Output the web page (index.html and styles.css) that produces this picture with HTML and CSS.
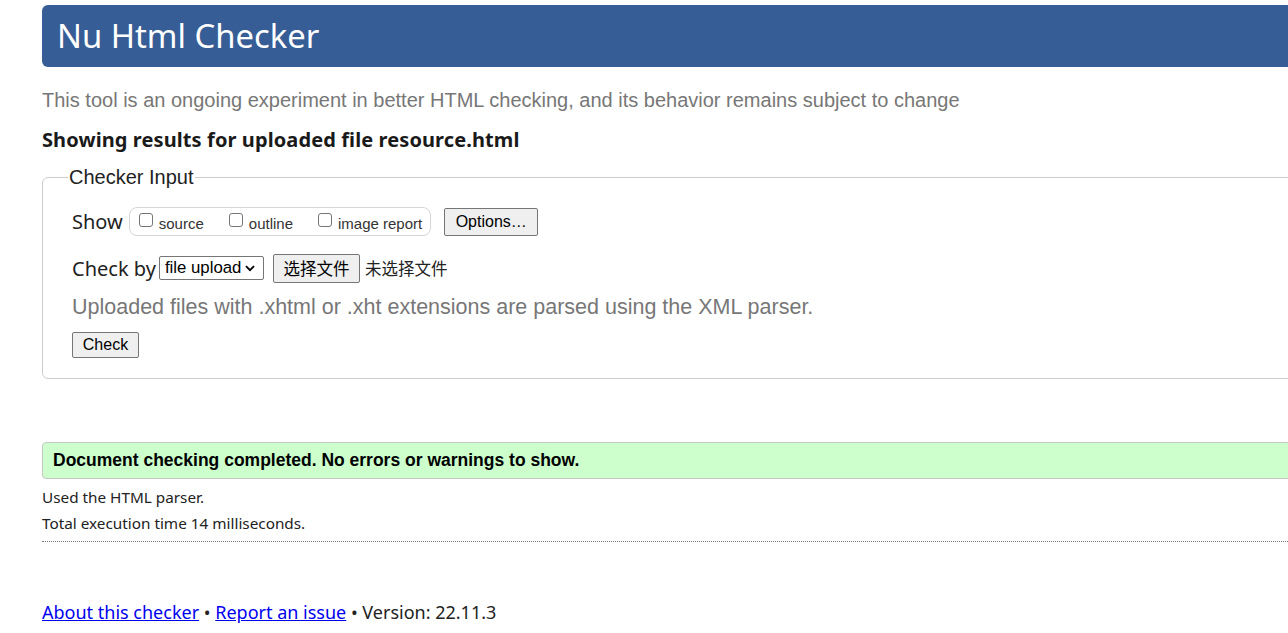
FILE: index.html
```html
<!DOCTYPE html>
<html lang="en">
<head>
<meta charset="utf-8">
<title>Nu Html Checker</title>
<link rel="stylesheet" href="styles.css">
</head>
<body>
<div class="page">
  <h1 class="title">Nu Html Checker</h1>
  <p class="intro">This tool is an ongoing experiment in better HTML checking, and its behavior remains subject to change</p>
  <p class="showing">Showing results for uploaded file resource.html</p>
  <fieldset class="input-box">
    <legend class="legend">Checker Input</legend>
    <div class="row show-row">
      <span class="label">Show</span>
      <div class="group">
        <label class="opt"><span class="cb"></span><span>source</span></label>
        <label class="opt"><span class="cb"></span><span>outline</span></label>
        <label class="opt"><span class="cb"></span><span>image report</span></label>
      </div>
      <span class="btn btn-options">Options…</span>
    </div>
    <div class="row by-row">
      <span class="label">Check by</span>
      <span class="select">file upload<svg class="chev" width="10" height="7" viewBox="0 0 10 7"><path d="M1 1.2 L5 5.2 L9 1.2" fill="none" stroke="#000" stroke-width="1.8"/></svg></span>
      <span class="btn btn-file">选择文件</span>
      <span class="nofile">未选择文件</span>
    </div>
    <p class="note">Uploaded files with .xhtml or .xht extensions are parsed using the XML parser.</p>
    <span class="btn btn-check">Check</span>
  </fieldset>
  <div class="success">Document checking completed. No errors or warnings to show.</div>
  <p class="meta">Used the HTML parser.</p>
  <p class="meta meta2">Total execution time 14 milliseconds.</p>
  <div class="rule"></div>
  <p class="footer"><a href="#">About this checker</a> • <a href="#">Report an issue</a> • Version: 22.11.3</p>
</div>
</body>
</html>
```

FILE: styles.css
```css
html, body {
  margin: 0;
  padding: 0;
  background: #fff;
  overflow: hidden;
}
body {
  font-family: "Noto Sans", "Open Sans", sans-serif;
  color: #222;
}
.page {
  margin-left: 42px;
  margin-right: -40px;
}
.title {
  margin: 5px 0 0 0;
  height: 62px;
  line-height: 62px;
  background: #365d95;
  color: #fff;
  font-family: "Noto Sans", sans-serif;
  font-weight: 400;
  font-size: 32.8px;
  padding-left: 15px;
  border-radius: 6px 0 0 6px;
}
.intro {
  margin: 21px 0 0 0;
  font-family: "Liberation Sans", Arial, sans-serif;
  font-size: 20px;
  line-height: 24px;
  color: #777;
}
.showing {
  margin: 16px 0 0 0;
  font-family: "Noto Sans", sans-serif;
  font-weight: 700;
  font-size: 20px;
  letter-spacing: 0.1px;
  line-height: 24px;
  color: #1a1a1a;
}
.input-box {
  margin: 13px 0 0 0;
  border: 1px solid #ccc;
  border-radius: 6px;
  padding: 0 0 20px 29px;
}
.legend {
  font-family: "Liberation Sans", Arial, sans-serif;
  font-size: 20px;
  line-height: 24px;
  color: #222;
  padding: 0 1px;
  margin-left: -4px;
}
.row {
  display: flex;
  align-items: center;
}
.show-row {
  margin-top: 17px;
  height: 30px;
}
.label {
  font-family: "Noto Sans", sans-serif;
  font-size: 20px;
  color: #222;
}
.group {
  display: flex;
  align-items: center;
  margin-left: 6px;
  height: 27px;
  border: 1px solid #d6d6d6;
  border-radius: 8px;
  padding: 0 8px 0 9px;
}
.opt {
  display: flex;
  align-items: center;
  font-family: "Liberation Sans", Arial, sans-serif;
  font-size: 15px;
  color: #333;
  margin-right: 25px;
}
.opt:last-child {
  margin-right: 0;
}
.cb {
  width: 12px;
  height: 12px;
  border: 1px solid #767676;
  border-radius: 3px;
  margin-right: 6px;
  margin-top: -3px;
  background: #fff;
}
.opt span:last-child {
  margin-top: 4px;
}
.btn {
  display: inline-flex;
  align-items: center;
  justify-content: center;
  box-sizing: border-box;
  background: #efefef;
  border: 1px solid #767676;
  border-radius: 2px;
  font-family: "Liberation Sans", Arial, sans-serif;
  font-size: 16px;
  color: #000;
}
.btn-options {
  margin-left: 13px;
  margin-top: 2px;
  width: 94px;
  height: 28px;
}
.by-row {
  margin-top: 17px;
  height: 30px;
}
.select {
  display: inline-flex;
  align-items: center;
  box-sizing: border-box;
  margin-left: 3px;
  width: 105px;
  height: 24px;
  border: 1px solid #767676;
  border-radius: 2px;
  padding-left: 5px;
  font-family: "Liberation Sans", Arial, sans-serif;
  font-size: 16.8px;
  color: #000;
}
.chev {
  margin-left: 4px;
}
.btn-file {
  margin-left: 9px;
  width: 87px;
  height: 29px;
  font-family: "Noto Sans CJK SC", sans-serif;
  font-size: 16.5px;
}
.nofile {
  margin-left: 5px;
  font-family: "Noto Sans CJK SC", sans-serif;
  font-size: 16.5px;
  color: #222;
}
.note {
  margin: 12px 0 0 0;
  font-family: "Liberation Sans", Arial, sans-serif;
  font-size: 21.5px;
  line-height: 24px;
  color: #777;
}
.btn-check {
  margin-top: 13px;
  width: 67px;
  height: 26px;
}
.success {
  margin-top: 63px;
  box-sizing: border-box;
  height: 37px;
  line-height: 35px;
  background: #ccffcc;
  border: 1px solid #c7c7c7;
  border-radius: 4px 0 0 4px;
  padding-left: 10px;
  font-family: "Liberation Sans", Arial, sans-serif;
  font-weight: 700;
  font-size: 17.5px;
  color: #000;
}
.meta {
  margin: 8px 0 0 0;
  font-family: "Noto Sans", sans-serif;
  font-size: 15.3px;
  line-height: 20px;
  color: #222;
}
.meta2 {
  margin-top: 6px;
}
.rule {
  margin-top: 8px;
  border-top: 1px dotted #777;
}
.footer {
  margin: 58px 0 0 0;
  font-family: "Noto Sans", sans-serif;
  font-size: 18px;
  line-height: 24px;
  color: #222;
}
.footer a {
  color: #0000ee;
}
```
